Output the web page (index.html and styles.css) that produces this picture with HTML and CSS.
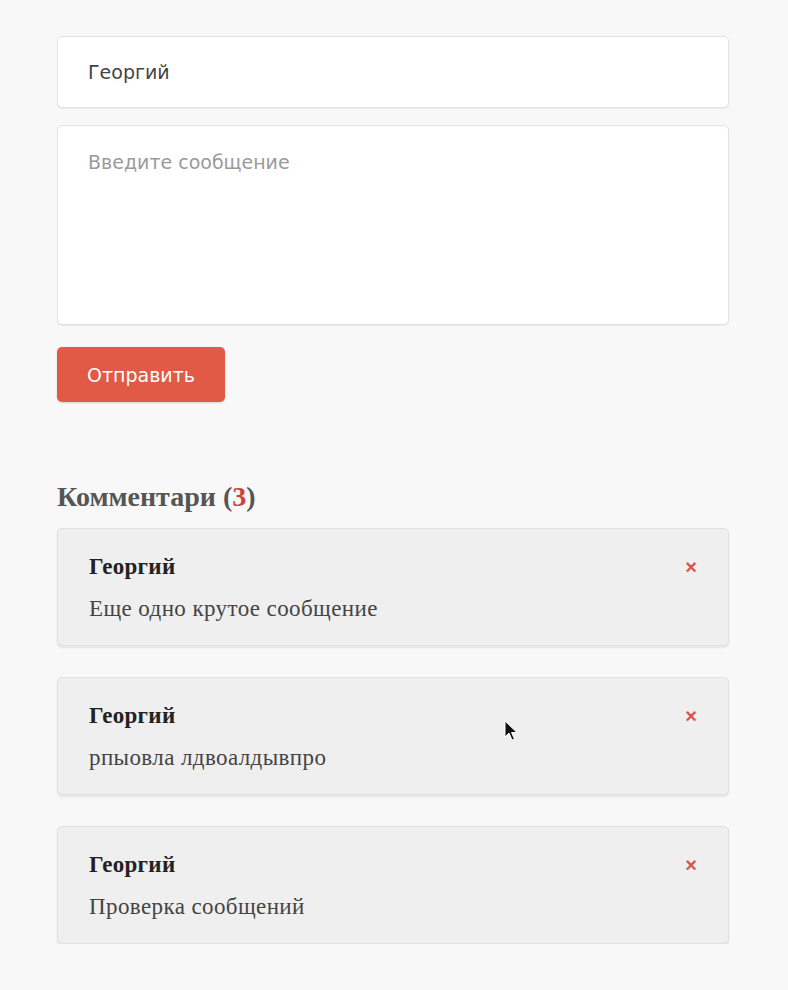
FILE: index.html
```html
<!DOCTYPE html>
<html lang="ru">
<head>
<meta charset="utf-8">
<link rel="stylesheet" href="styles.css">
</head>
<body>
<div class="page">
  <form class="form">
    <input class="field" type="text" value="Георгий">
    <textarea class="field area" placeholder="Введите сообщение"></textarea>
    <div><button class="btn" type="button">Отправить</button></div>
  </form>
  <h2 class="title">Комментари (<span class="count">3</span>)</h2>
  <div class="list">
    <div class="card">
      <div class="head"><span class="name">Георгий</span><span class="del">×</span></div>
      <div class="text">Еще одно крутое сообщение</div>
    </div>
    <div class="card">
      <div class="head"><span class="name">Георгий</span><span class="del">×</span></div>
      <div class="text">рпыовла лдвоалдывпро</div>
      <svg class="cursor" width="14" height="22" viewBox="0 0 14 22"><path d="M1 1 L1 17 L5 13 L8 20 L10.5 19 L7.5 12.5 L13 12.5 Z" fill="#111" stroke="#fff" stroke-width="1"/></svg>
    </div>
    <div class="card">
      <div class="head"><span class="name">Георгий</span><span class="del">×</span></div>
      <div class="text">Проверка сообщений</div>
    </div>
  </div>
</div>
</body>
</html>
```
FILE: styles.css
```css
* { box-sizing: border-box; }
html, body { margin: 0; padding: 0; background: #f8f8f8; }
.page { width: 672px; margin-left: 57px; padding-top: 36px; }
.form { display: flex; flex-direction: column; gap: 17px; }
.field {
  display: block; width: 100%; height: 72px;
  background: #fff; border: 1px solid #e2e2e2; border-radius: 5px;
  box-shadow: 0 1px 1px rgba(0,0,0,0.06);
  padding: 0 30px; font-family: "DejaVu Sans", Verdana, sans-serif;
  font-size: 19px; color: #444; outline: none;
}
.area { height: 200px; padding: 25px 30px; resize: none; }
.area::placeholder { color: #9a9a9a; }
.btn {
  margin-top: 5px; width: 168px; height: 55px; border: none; border-radius: 5px;
  background: #e05a46; color: #fff; font-family: "DejaVu Sans", Verdana, sans-serif;
  font-size: 19px; box-shadow: 0 1px 2px rgba(0,0,0,0.15);
}
.title {
  margin: 80px 0 16px; font-family: "Liberation Serif", "Times New Roman", serif;
  font-weight: bold; font-size: 28px; color: #555; line-height: 30px;
}
.count { color: #c9453a; }
.list { display: flex; flex-direction: column; gap: 31px; }
.card {
  position: relative; height: 118px; background: #efefef;
  border: 1px solid #e0e0e0; border-radius: 5px;
  box-shadow: 0 2px 2px rgba(0,0,0,0.08);
  padding: 24px 30px 0 31px;
  font-family: "Liberation Serif", "Times New Roman", serif; color: #333;
}
.head { display: flex; justify-content: space-between; align-items: center; }
.name { font-weight: bold; font-size: 23px; letter-spacing: 0.3px; color: #222; line-height: 28px; }
.del { color: #d9534f; font-family: "Liberation Sans", Arial, sans-serif; font-size: 20px; font-weight: bold; margin-right: 1px; }
.text { margin-top: 14px; font-size: 23px; letter-spacing: 0.4px; line-height: 28px; color: #444; }
.cursor { position: absolute; left: 446px; top: 42px; }
```
